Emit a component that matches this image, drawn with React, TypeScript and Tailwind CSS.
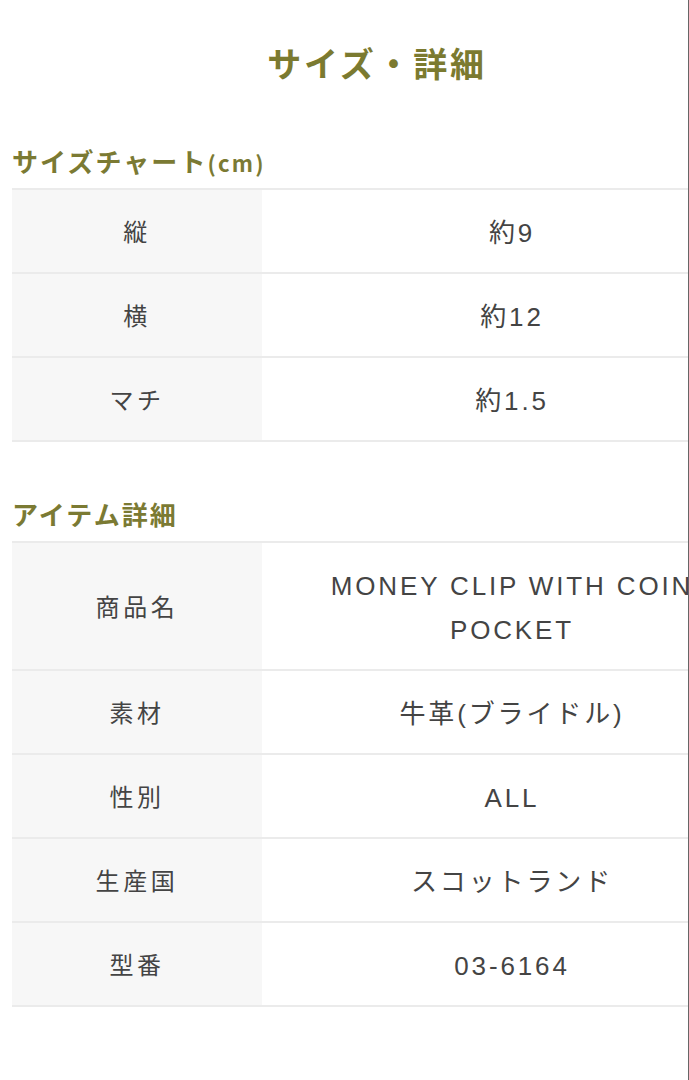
const sizeRows = [
  { label: "縦", value: "約9" },
  { label: "横", value: "約12" },
  { label: "マチ", value: "約1.5" },
];

const itemRows = [
  { label: "商品名", value: "MONEY CLIP WITH COIN POCKET" },
  { label: "素材", value: "牛革(ブライドル)" },
  { label: "性別", value: "ALL" },
  { label: "生産国", value: "スコットランド" },
  { label: "型番", value: "03-6164" },
];

const SpecTable = ({ rows }: { rows: { label: string; value: string }[] }) => (
  <div className="border-t-2 border-[#ebebeb]">
    {rows.map((r) => (
      <div key={r.label} className="flex border-b-2 border-[#ebebeb]">
        <div className="w-[250px] shrink-0 bg-[#f7f7f7] flex items-center justify-center text-[24px] tracking-[0.15em] text-[#444]">
          {r.label}
        </div>
        <div className="w-[500px] min-h-[82px] flex items-center justify-center px-[60px] py-[19px] pt-[21px] pb-[17px] text-center text-[26px] leading-[44px] tracking-[0.11em] text-[#444] font-['Liberation_Sans','Noto_Sans_CJK_JP',sans-serif]">
          {r.value}
        </div>
      </div>
    ))}
  </div>
);

export default function App() {
  return (
    <div className="w-[689px] h-[1080px] overflow-hidden bg-white border-r border-[#666] font-['Noto_Sans_CJK_JP',sans-serif]">
      <div className="w-[750px] ml-[12px]">
        <h1 className="pt-[43px] pr-[20px] text-center text-[34px] font-bold leading-[46px] tracking-[0.08em] text-[#7b7a30] font-['Liberation_Serif','Noto_Sans_CJK_JP',serif]">
          サイズ・詳細
        </h1>

        <h2 className="mt-[54px] mb-[8px] text-[26px] font-bold leading-[36px] tracking-[0.08em] text-[#7b7a33]">
          サイズチャート<span className="text-[22px] tracking-[0.1em]">(cm)</span>
        </h2>
        <SpecTable rows={sizeRows} />

        <h2 className="mt-[54px] mb-[9px] text-[26px] font-bold leading-[36px] tracking-[0.08em] text-[#7b7a33]">
          アイテム詳細
        </h2>
        <SpecTable rows={itemRows} />
      </div>
    </div>
  );
}
